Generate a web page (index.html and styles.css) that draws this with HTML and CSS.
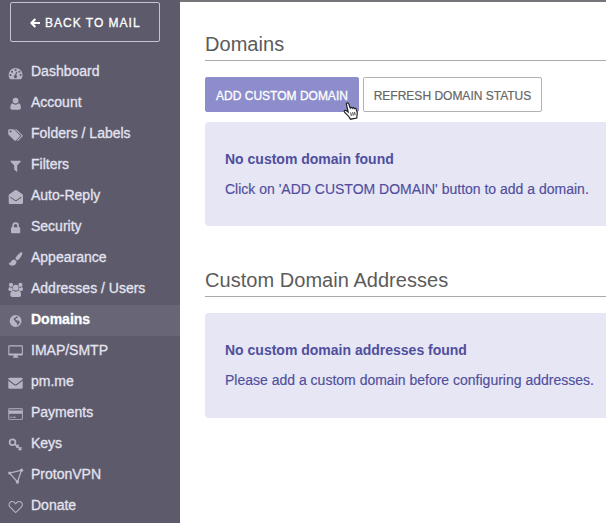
FILE: index.html
```html
<!DOCTYPE html>
<html lang="en">
<head>
<meta charset="utf-8">
<title>Domains</title>
<link rel="stylesheet" href="styles.css">
</head>
<body>
<div class="app">
  <aside class="sidebar">
    <a class="back"><svg class="back-icon" viewBox="0 0 10 10"><path d="M5.3 1 1.5 5l3.8 4M2 5h8" /></svg><span>BACK TO MAIL</span></a>
    <nav class="menu">
      <a class="item"><svg class="icon" viewBox="0 0 16 16"><path fill-rule="evenodd" d="M2.300 13.300C1.100 12 .6 10.500.6 8.900a7 7 0 0 1 14 0c0 1.600-.5 3.100-1.700 4.400zM2.500 8a1 1 0 1 0 0 2 1 1 0 0 0 0-2zM4 4.700a1 1 0 1 0 0 2 1 1 0 0 0 0-2zM7.600 3a1 1 0 1 0 0 2 1 1 0 0 0 0-2zM11.400 4.700a1 1 0 1 0 0 2 1 1 0 0 0 0-2zM12.700 8a1 1 0 1 0 0 2 1 1 0 0 0 0-2zM8.200 5.700 7.100 9a1.600 1.600 0 1 0 1.200.2L9.200 6z"/></svg><span>Dashboard</span></a>
      <a class="item"><svg class="icon" viewBox="0 0 16 16"><circle cx="7.600" cy="3.600" r="2.900"/><path d="M4.500 6.200C3 6.500 2.300 8.300 2.300 10.700c0 1.200.7 2 1.800 2h7c1.100 0 1.800-.8 1.800-2 0-2.400-.7-4.200-2.200-4.500a4.500 4.500 0 0 1-6.200 0z"/></svg><span>Account</span></a>
      <a class="item"><svg class="icon" viewBox="0 0 16 16"><path fill-rule="evenodd" d="M.2 2.200q0-1 1-1h3.700q.8 0 1.400.6l5.500 5.400q.7.700 0 1.400l-3.900 3.900q-.7.700-1.400 0L.8 6.900Q.2 6.300.2 5.500zm2.400.2a1.100 1.100 0 1 0 0 2.200 1.100 1.100 0 0 0 0-2.200z"/><path d="M6.700 1.200h.8q.8 0 1.400.6l5.500 5.400q.7.700 0 1.400l-3.900 3.900q-.7.700-1.300.2l-.2-.3 3.900-3.800q.7-.7 0-1.500z"/></svg><span>Folders / Labels</span></a>
      <a class="item"><svg class="icon" viewBox="0 0 16 16"><path d="M2.700 1.700h9.900q.7.300.2.900L9.200 6.500v6q-.3.500-.9 0L6.200 10.500v-4L2.500 2.600q-.4-.6.200-.9z"/></svg><span>Filters</span></a>
      <a class="item"><svg class="icon" viewBox="0 0 16 16"><path fill-rule="evenodd" d="M.7 5.200Q.7 4.600 1.200 4.200L6.700.4q1.200-.8 2.400 0l5.400 3.800q.5.400.5 1v7.500q0 1.300-1.300 1.300H2Q.7 14 .7 12.700zM2.500 6.700 2 7.400l4.400 3.200q1.500 1 3 0l4.200-3.200-.5-.7-4.300 3.100q-1 .6-2 0z"/></svg><span>Auto-Reply</span></a>
      <a class="item"><svg class="icon" viewBox="0 0 16 16"><path fill-rule="evenodd" d="M3.700 6.200h.6V4.500a3.300 3.300 0 0 1 6.600 0v1.700h.6q.7 0 .7.700v4.600q0 .7-.7.700H3.700q-.7 0-.7-.7V6.900q0-.7.700-.7zm2.300 0h3.200V4.500a1.600 1.600 0 0 0-3.200 0z"/></svg><span>Security</span></a>
      <a class="item"><svg class="icon" viewBox="0 0 16 16"><path d="M12.500.5c.8-.6 2.200 0 1.800 1.200-.7 2.300-2.900 6-5 6.900L7.300 6.700C8.100 4.600 10.700 1.700 12.500.5zM6.500 7.500l2 1.900c.1 2.500-1.500 4.300-4 4.300-2.100 0-3.400-1-3.800-3.200.9.600 1.500.7 2-.3.700-1.600 2-2.800 3.800-2.700z"/></svg><span>Appearance</span></a>
      <a class="item"><svg class="icon" viewBox="0 0 16 16"><circle cx="3" cy="1.900" r="2.100"/><circle cx="12.400" cy="1.900" r="2.100"/><circle cx="7.700" cy="4.700" r="2.900"/><path d="M1.300 3.900q1.500 1.200 3.100.5c-.2 1.100.1 2 .7 2.700q-1 .1-1.600.8H1.800Q.4 7.900.4 6.800q0-2.600.9-2.900zM14.100 3.900q-1.500 1.200-3.100.5c.2 1.100-.1 2-.7 2.700q1 .1 1.600.8h1.700q1.400 0 1.400-1.100 0-2.600-.9-2.900zM4.900 7.600q2.800 2.100 5.600 0c1.600.1 2.600 1.700 2.600 4.400q0 1.900-1.800 1.900H4.100q-1.800 0-1.800-1.900C2.300 9.300 3.300 7.700 4.900 7.600z"/></svg><span>Addresses / Users</span></a>
      <a class="item active"><svg class="icon" viewBox="0 0 16 16"><path fill-rule="evenodd" d="M7.600 1.100a5.900 5.900 0 1 0 0 11.800 5.900 5.900 0 0 0 0-11.800zM8.500 2.300l1.700.8-.8 1-1.200.2-.7 1.200 1.700 1.100 1.800.2.900 1.200-.8 1.800-1.900 1.700-.3-.6.200-1.600-1.600-1.400-.6-1.200-.9-.5-.6-1.200 1.300-1.200.6-.2.700-.8z"/></svg><span>Domains</span></a>
      <a class="item"><svg class="icon" viewBox="0 0 16 16"><path fill-rule="evenodd" d="M1.300.3h12.600q1 0 1 1v8.200q0 1-1 1H9.400l.3 1.400h.7v.9H4.800v-.9h.7l.3-1.400H1.300q-1 0-1-1V1.300q0-1 1-1zm.1 1.100v7h12.400v-7z"/></svg><span>IMAP/SMTP</span></a>
      <a class="item"><svg class="icon" viewBox="0 0 16 16"><path d="M1.500 1.700h12q1.200 0 1.200 1.200v.4L8.700 8q-1.200.8-2.400 0L.3 3.300v-.4q0-1.200 1.200-1.200z"/><path d="M.3 4.700 6 9q1.500 1 3 0l5.700-4.300v6.800q0 1.200-1.200 1.200h-12Q.3 12.700.3 11.500z"/></svg><span>pm.me</span></a>
      <a class="item"><svg class="icon" viewBox="0 0 16 16"><path fill-rule="evenodd" d="M1.300 1.300h12.500q1 0 1 1v9.500q0 1-1 1H1.300q-1 0-1-1V2.300q0-1 1-1zm-.1.900v1.300h12.700V2.200zm0 4.600v5.100h12.700V6.800zM2.200 9.800h1.500v.9H2.200zm2.400 0h3v.9h-3z"/></svg><span>Payments</span></a>
      <a class="item"><svg class="icon line" viewBox="0 0 16 16"><circle cx="4.500" cy="4.300" r="2.900" stroke-width="1.700"/><path stroke-width="1.700" d="m6.700 6.200 6.700 5.600M10.600 6.900 8.300 9.600M13.400 9.200l-2.500 3"/></svg><span>Keys</span></a>
      <a class="item"><svg class="icon line" viewBox="0 0 16 16"><path d="M1.600 4.100 13.500 1.200 9.500 13z" stroke-width="1.300"/><g class="node"><circle cx="1.700" cy="4.100" r="1.500"/><circle cx="13.500" cy="1.200" r="1.700"/><circle cx="9.400" cy="13" r="1.700"/></g></svg><span>ProtonVPN</span></a>
      <a class="item"><svg class="icon line" viewBox="0 0 16 16"><path d="M7.700 12.600 2.200 7.200C-.1 4.700 1.500 1.500 4.200 1.500c1.700 0 2.700 1 3.500 2.200.8-1.200 1.800-2.200 3.500-2.200 2.700 0 4.300 3.200 2 5.700z"/></svg><span>Donate</span></a>
    </nav>
  </aside>
  <main class="content">
    <section>
      <h2>Domains</h2>
      <div class="actions">
        <button class="btn primary"><span>ADD CUSTOM DOMAIN</span></button>
        <button class="btn"><span>REFRESH DOMAIN STATUS</span></button>
        <svg class="cursor" viewBox="0 0 16 18"><path class="hand" d="M3.300 1.800C4 .5 5.200.7 5.700 1.900L7.200 6c.5-1 1.800-.8 2.100.2.600-.9 1.800-.6 2 .4.700-.7 1.800-.3 2 .8l.9 3.100c.3 1.600-.4 3-.4 5.500l-6.300 1.200C6.500 14.400 3 12.200 1.400 9.800.8 8.600 2.300 8 3.500 8.800l1.700 1.300z"/><path class="lines" d="m7.700 10.500.6 3.500M9.700 10.200l.6 3.400M11.600 10l.5 3.200"/></svg>
      </div>
      <div class="notice"><strong>No custom domain found</strong><p>Click on 'ADD CUSTOM DOMAIN' button to add a domain.</p></div>
    </section>
    <section class="addresses">
      <h2>Custom Domain Addresses</h2>
      <div class="notice"><strong>No custom domain addresses found</strong><p>Please add a custom domain before configuring addresses.</p></div>
    </section>
  </main>
</div>
</body>
</html>
```
FILE: styles.css
```css
* { box-sizing: border-box; }
body { margin: 0; font-family: "Liberation Sans", Arial, sans-serif; background: #fff; }
.app { display: flex; width: 606px; height: 523px; overflow: hidden; }
.sidebar { width: 180px; flex: none; padding-top: 2px; background: #5c5a6b; }
.back { display: flex; align-items: center; width: 150px; height: 40px; margin: 0 10px 15px; padding: 2px 0 0 18px; border: 1px solid #c5c4d0; border-radius: 2px; color: #fff; font-size: 12px; letter-spacing: 1px; white-space: nowrap; -webkit-text-stroke: .3px #fff; }
.back-icon { width: 10px; height: 10px; margin: 0 5px 0 1px; fill: none; stroke: #fff; stroke-width: 2.2; }
.item { display: flex; height: 31px; padding-left: 8px; color: #e4e3f0; font-size: 14px; line-height: 28px; white-space: nowrap; -webkit-text-stroke: .3px #e4e3f0; }
.icon { width: 16px; height: 16px; margin: 9px 7px 0 0; fill: #b6b4c5; overflow: visible; }
.line { fill: none; stroke: #b6b4c5; stroke-width: 1.1; }
.node { fill: #b6b4c5; stroke: none; }
.active { background: #686676; color: #fff; font-weight: bold; -webkit-text-stroke-color: #fff; }
.content { flex: 1; min-width: 0; padding: 30px 0 0 25px; border-top: 2px solid #77757a; }
h2 { height: 29px; margin: 0; border-bottom: 1px solid #aaa; color: #5b5b5b; font-size: 20px; font-weight: normal; line-height: 25px; letter-spacing: .04px; white-space: nowrap; }
.actions { position: relative; display: flex; gap: 4px; margin-top: 16px; }
.btn { width: 179px; height: 35px; padding: 2px 0 0; border: 1px solid #b2b2b2; border-radius: 2px; background: #fff; color: #666; font: 12px "Liberation Sans", Arial, sans-serif; white-space: nowrap; -webkit-text-stroke: .2px #666; }
.primary { width: 154px; border-color: #8d8dcc; background: #8d8dcc; color: #fff; -webkit-text-stroke: .3px #fff; }
.cursor { position: absolute; left: 138px; top: 25px; width: 16px; height: 18px; overflow: visible; }
.hand { fill: #fff; stroke: #222; stroke-width: 1.2; }
.lines { fill: none; stroke: #222; stroke-width: .9; }
.notice { height: 104px; margin-top: 10px; padding: 27px 20px 0; border-radius: 4px 0 0 4px; background: #e6e6f4; color: #504e9d; font-size: 14px; line-height: 20px; white-space: nowrap; }
.notice strong { display: block; }
.notice p { margin: 10px 0 0; -webkit-text-stroke: .15px #504e9d; }
.addresses { margin-top: 42px; }
.addresses .notice { margin-top: 16px; height: 105px; }
```
